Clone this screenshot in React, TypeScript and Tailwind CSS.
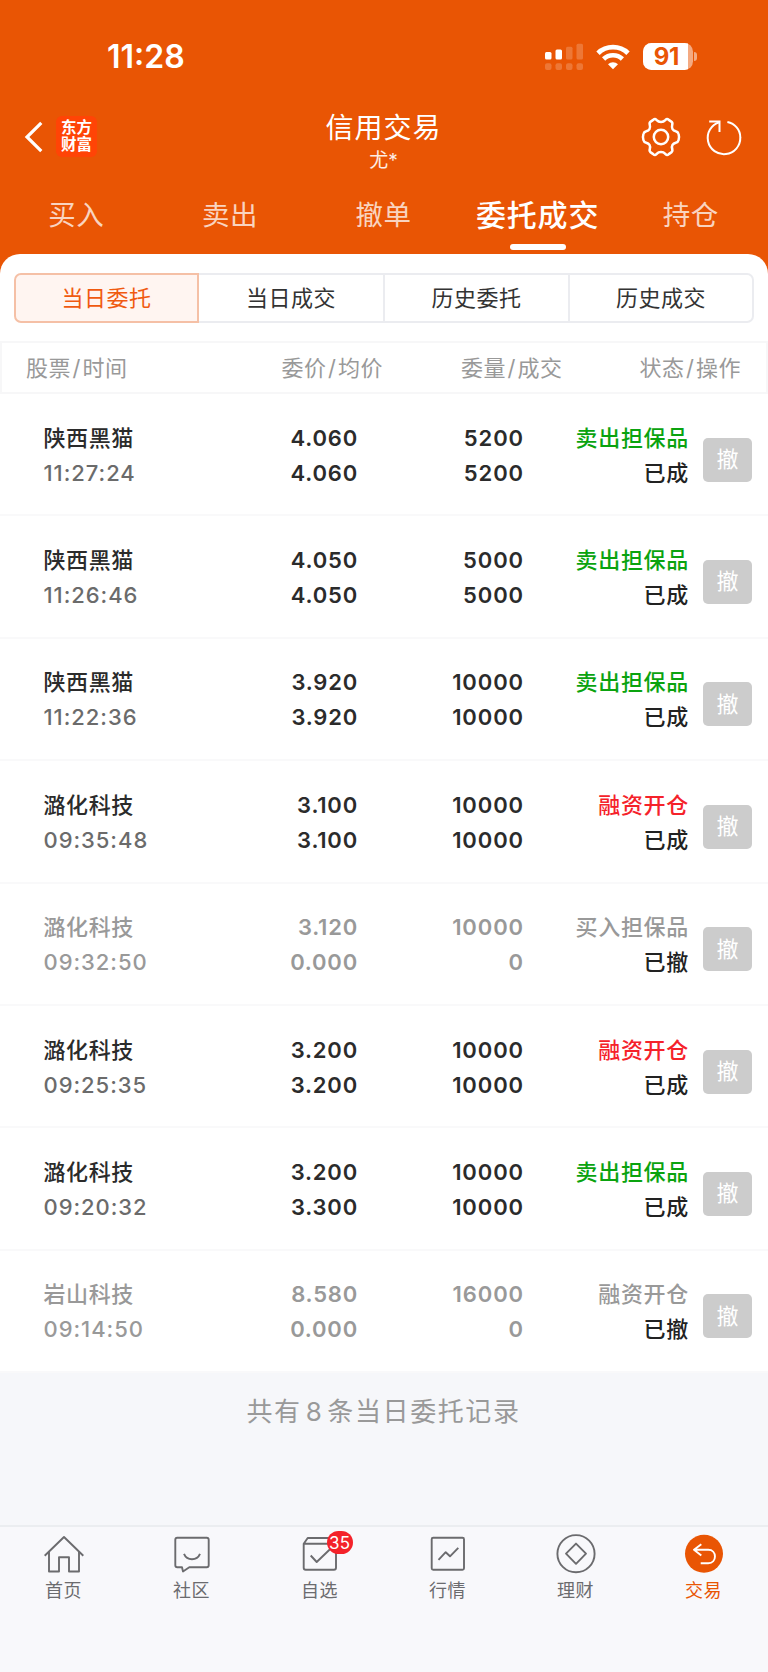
import type { ReactNode } from 'react'
import clsx from 'clsx'

type Side = 'sell' | 'margin' | 'none'

interface Order {
  name: string
  time: string
  price: string
  avgPrice: string
  amount: string
  filled: string
  action: string
  side: Side
  status: string
}

const orders: Order[] = [
  { name: '陕西黑猫', time: '11:27:24', price: '4.060', avgPrice: '4.060', amount: '5200', filled: '5200', action: '卖出担保品', side: 'sell', status: '已成' },
  { name: '陕西黑猫', time: '11:26:46', price: '4.050', avgPrice: '4.050', amount: '5000', filled: '5000', action: '卖出担保品', side: 'sell', status: '已成' },
  { name: '陕西黑猫', time: '11:22:36', price: '3.920', avgPrice: '3.920', amount: '10000', filled: '10000', action: '卖出担保品', side: 'sell', status: '已成' },
  { name: '潞化科技', time: '09:35:48', price: '3.100', avgPrice: '3.100', amount: '10000', filled: '10000', action: '融资开仓', side: 'margin', status: '已成' },
  { name: '潞化科技', time: '09:32:50', price: '3.120', avgPrice: '0.000', amount: '10000', filled: '0', action: '买入担保品', side: 'none', status: '已撤' },
  { name: '潞化科技', time: '09:25:35', price: '3.200', avgPrice: '3.200', amount: '10000', filled: '10000', action: '融资开仓', side: 'margin', status: '已成' },
  { name: '潞化科技', time: '09:20:32', price: '3.200', avgPrice: '3.300', amount: '10000', filled: '10000', action: '卖出担保品', side: 'sell', status: '已成' },
  { name: '岩山科技', time: '09:14:50', price: '8.580', avgPrice: '0.000', amount: '16000', filled: '0', action: '融资开仓', side: 'none', status: '已撤' },
]

const mainTabs = ['买入', '卖出', '撤单', '委托成交', '持仓']
const subTabs = ['当日委托', '当日成交', '历史委托', '历史成交']

const sideColors: Record<Side, string> = {
  sell: 'text-[#0aa30f]',
  margin: 'text-[#f5222a]',
  none: 'text-[#999999]',
}

function StatusBar() {
  return (
    <div className="flex h-[112px] items-center justify-between pl-[107px] pr-[71px] pt-[2px]">
      <span className="text-[32px] font-semibold leading-none">11:28</span>
      <div className="flex items-center pb-px">
        <svg width="39" height="28" viewBox="0 0 39 28" fill="white">
          <rect x="0" y="9" width="6.5" height="7.6" rx="1.5" />
          <rect x="10.5" y="6.6" width="6.5" height="10" rx="1.5" />
          <g opacity="0.2">
            <rect x="21" y="3.7" width="6.5" height="12.9" rx="1.5" />
            <rect x="31.5" y="0.7" width="6.5" height="15.9" rx="1.5" />
            <rect x="0" y="20.3" width="6.5" height="6.7" rx="2" />
            <rect x="10.5" y="20.3" width="6.5" height="6.7" rx="2" />
            <rect x="21" y="20.3" width="6.5" height="6.7" rx="2" />
            <rect x="31.5" y="20.3" width="6.5" height="6.7" rx="2" />
          </g>
        </svg>
        <svg className="ml-[12px]" width="34" height="26" viewBox="0 0 34 26" fill="none" stroke="white">
          <path d="M2 9.2C10.2 1.2 23.8 1.2 32 9.2" strokeWidth="4.8" />
          <path d="M7.6 15C12.8 9.9 21.2 9.9 26.4 15" strokeWidth="4.6" />
          <path d="M17 25.2L12 20.2C14.8 17.5 19.2 17.5 22 20.2Z" fill="white" stroke="none" />
        </svg>
        <div className="ml-[13px] flex items-center">
          <div className="flex h-[27px] w-[50px] overflow-hidden rounded-[8.5px] bg-white/50">
            <div className="flex h-full w-[45px] items-center justify-center bg-white pl-[3px] text-[24px] font-bold leading-none tracking-[-0.3px] text-[#e95504]">
              91
            </div>
          </div>
          <div className="ml-[1.5px] h-[9px] w-[3px] rounded-r-full bg-white/50" />
        </div>
      </div>
    </div>
  )
}

function TitleBar() {
  return (
    <div className="grid h-[70px] grid-cols-3 pl-[24px] pr-[25px]">
      <div className="flex items-center pb-[21px]">
        <svg width="20" height="34" viewBox="0 0 20 34" fill="none" stroke="white" strokeWidth="3.2">
          <path d="M17.3 2.8L3 17L17.3 31.2" />
        </svg>
        <div className="ml-[12px] flex h-[41px] w-[41px] flex-col items-center justify-center rounded-[6px] bg-[#ff4406] pb-px text-[15.5px] font-bold leading-[17px]">
          <span>东方</span>
          <span>财富</span>
        </div>
      </div>
      <div className="flex flex-col items-center">
        <h1 className="text-[28px] leading-[32px] tracking-[1px]">信用交易</h1>
        <p className="mt-[4px] text-[19px] leading-[26px] text-white/90">尤*</p>
      </div>
      <div className="flex items-center justify-end gap-[23px] pb-[21px]">
        <svg width="42" height="42" viewBox="0 0 42 42" fill="none" stroke="white" strokeWidth="2.5" strokeLinejoin="round">
          <path d="M13.2 3.9C14.6 2.6 15.7 2.9 16.7 4.1C18.9 6.5 23.1 6.5 25.3 4.1C26.3 2.9 27.4 2.6 28.8 3.9L31.3 5.6C32.6 6.6 32.7 7.5 32.2 9C31.3 12.3 32.7 14.4 35.8 15.2C37.6 15.6 38.2 16.3 38.6 18C39.2 20 39.2 22 38.6 24C38.2 25.7 37.6 26.4 35.8 26.8C32.7 27.6 31.3 29.7 32.2 33C32.7 34.5 32.6 35.4 31.3 36.4L28.8 38.1C27.4 39.4 26.3 39.1 25.3 37.9C23.1 35.5 18.9 35.5 16.7 37.9C15.7 39.1 14.6 39.4 13.2 38.1L10.7 36.4C9.4 35.4 9.3 34.5 9.8 33C10.7 29.7 9.3 27.6 6.2 26.8C4.4 26.4 3.8 25.7 3.4 24C2.8 22 2.8 20 3.4 18C3.8 16.3 4.4 15.6 6.2 15.2C9.3 14.4 10.7 12.3 9.8 9C9.3 7.5 9.4 6.6 10.7 5.6Z" />
          <circle cx="21" cy="21" r="7.2" />
        </svg>
        <svg width="38" height="38" viewBox="0 0 38 38" fill="none" stroke="white" strokeWidth="2">
          <path d="M22.4 4C29.9 5.6 35.3 11.7 35.3 19.4A16.3 16.3 0 1 1 14.3 4.3" />
          <path d="M4.2 3.4H14.5V14" />
        </svg>
      </div>
    </div>
  )
}

function MainTabs() {
  return (
    <div className="grid h-[72px] grid-cols-5">
      {mainTabs.map((tab) => {
        const active = tab === '委托成交'
        return (
          <div key={tab} className="flex flex-col items-center">
            <span
              className={clsx(
                'mt-[13px] h-[40px] whitespace-nowrap leading-[40px]',
                active ? 'text-[30px] font-medium tracking-[0.8px]' : 'pr-[1px] text-[27.5px] tracking-[0.5px] text-white/75'
              )}
            >
              {tab}
            </span>
            {active && <span className="mt-[9px] h-[5.5px] w-[56px] rounded-full bg-white" />}
          </div>
        )
      })}
    </div>
  )
}

function OrderRow({ order }: { order: Order }) {
  const cancelled = order.side === 'none'
  const color = cancelled ? 'text-[#999999]' : 'text-[#2b2b2b]'

  return (
    <li className="flex h-[122.4px] items-start border-b-2 border-[#f9f9fa] pt-[26.6px] text-[22px] font-medium leading-[35px]">
      <div className="w-[200px] pl-[43.5px]">
        <p className={clsx('tracking-[0.6px]', color)}>{order.name}</p>
        <p className={clsx('tracking-[0.95px]', cancelled ? 'text-[#999999]' : 'text-[#6b6b6b]')}>{order.time}</p>
      </div>
      <div className={clsx('w-[158px] text-right font-semibold tracking-[0.8px]', color)}>
        <p>{order.price}</p>
        <p>{order.avgPrice}</p>
      </div>
      <div className={clsx('w-[166px] text-right font-semibold tracking-[0.9px]', color)}>
        <p>{order.amount}</p>
        <p>{order.filled}</p>
      </div>
      <div className="w-[165px] text-right tracking-[0.7px]">
        <p className={sideColors[order.side]}>{order.action}</p>
        <p className="text-[#222222]">{order.status}</p>
      </div>
      <button className="ml-[14px] mt-[17px] h-[44px] w-[49px] rounded-[5px] bg-[#cccccc] text-[22px] font-normal leading-[43px] text-white">
        撤
      </button>
    </li>
  )
}

function NavItem({ label, active, children }: { label: string; active?: boolean; children: ReactNode }) {
  return (
    <div className={clsx('flex flex-col items-center pt-[5px]', active ? 'text-[#e95504]' : 'text-[#6b6b6e]')}>
      <div className="relative h-[44px] w-[44px]">{children}</div>
      <span className="mt-[2px] pr-[1px] text-[18px] leading-[26px] tracking-[0.4px]">{label}</span>
    </div>
  )
}

function Icon({ children }: { children: ReactNode }) {
  return (
    <svg width="44" height="44" viewBox="0 0 44 44" fill="none" stroke="currentColor" strokeWidth="1.9" strokeLinejoin="round">
      {children}
    </svg>
  )
}

export default function App() {
  return (
    <div className="flex h-[1672px] w-[768px] flex-col overflow-hidden bg-[#e95504] font-['Inter','Noto_Sans_CJK_SC',sans-serif]">
      <header className="h-[254px] shrink-0 text-white">
        <StatusBar />
        <TitleBar />
        <MainTabs />
      </header>

      <main className="flex flex-1 flex-col rounded-t-[20px] bg-white pt-[19px]">
        <div className="mx-[14px] grid h-[49px] grid-cols-[185px_186px_185px_184px] text-center text-[22px] leading-[46px] tracking-[0.5px] text-[#333333]">
          {subTabs.map((tab, i) => (
            <div
              key={tab}
              className={clsx(
                'border-y-2',
                i === 0 && 'rounded-l-[7px] border-x-2 border-[#f5c0a6] bg-[#fff5f1] text-[#f05a10]',
                i > 0 && 'border-r-2 border-[#ebecf0]',
                i === 3 && 'rounded-r-[7px]'
              )}
            >
              {tab}
            </div>
          ))}
        </div>

        <div className="mt-[19px] flex h-[53px] border-2 border-[#f7f7f8] text-[22px] leading-[50px] tracking-[0.5px] text-[#999999]">
          <span className="w-[180px] pl-[24px]">股票<i className="mx-[1.5px] not-italic">/</i>时间</span>
          <span className="w-[201px] text-right">委价<i className="mx-[1.5px] not-italic">/</i>均价</span>
          <span className="w-[179.5px] text-right">委量<i className="mx-[1.5px] not-italic">/</i>成交</span>
          <span className="w-[178.5px] text-right">状态<i className="mx-[1.5px] not-italic">/</i>操作</span>
        </div>

        <ul>
          {orders.map((order) => (
            <OrderRow key={order.time} order={order} />
          ))}
        </ul>

        <p className="flex-1 bg-[#f6f7fa] pr-[1px] pt-[19px] text-center text-[26px] leading-[40px] tracking-[1.6px] text-[#999999]">
          共有<span className="mx-[4px]">8</span>条当日委托记录
        </p>
      </main>

      <nav className="grid h-[147px] shrink-0 grid-cols-6 border-t-2 border-[#ebedf0] bg-[#f8f8fb]">
        <NavItem label="首页">
          <Icon>
            <path d="M2.7 23.7L22 5L41.3 23.7" />
            <path d="M7 20V39.5H17V25.3H27V39.5H37V20" />
          </Icon>
        </NavItem>
        <NavItem label="社区">
          <Icon>
            <path d="M7.3 5.7H36.7Q38.7 5.7 38.7 7.7V33.3Q38.7 35.3 36.7 35.3H19.3L13 39.5L12 35.3H7.3Q5.3 35.3 5.3 33.3V7.7Q5.3 5.7 7.3 5.7Z" />
            <path d="M14 21.8C17 29 27 29 30 21.8" />
          </Icon>
        </NavItem>
        <NavItem label="自选">
          <Icon>
            <path d="M5.7 11.7H38V35.7Q38 37.7 36 37.7H7.7Q5.7 37.7 5.7 35.7ZL9.7 6H34L38 11.7" />
            <path d="M12.7 23.5L18.7 30L32 17.3" />
          </Icon>
          <span className="absolute left-[28.5px] top-[-1px] h-[23px] w-[26.5px] rounded-full bg-[#f4222a] text-center text-[17px] leading-[24px] tracking-[0.3px] text-white">
            35
          </span>
        </NavItem>
        <NavItem label="行情">
          <Icon>
            <rect x="5.7" y="5.7" width="32.3" height="32" rx="1.5" />
            <path d="M12.5 27.9L19.7 20.2L24 24.3L32.3 15.8" />
          </Icon>
        </NavItem>
        <NavItem label="理财">
          <Icon>
            <circle cx="22" cy="21.7" r="18.6" />
            <path d="M22 11.6L32 21.7L22 31.8L12 21.7Z" />
          </Icon>
        </NavItem>
        <NavItem label="交易" active>
          <Icon>
            <circle cx="22" cy="21.7" r="19" fill="currentColor" stroke="none" />
            <path d="M19.3 12.2L12 17.8L19.3 23.6M12 17.8H26.2C35.2 17.8 35.2 31.3 26.2 31.3H18.7" stroke="white" />
          </Icon>
        </NavItem>
      </nav>
    </div>
  )
}
